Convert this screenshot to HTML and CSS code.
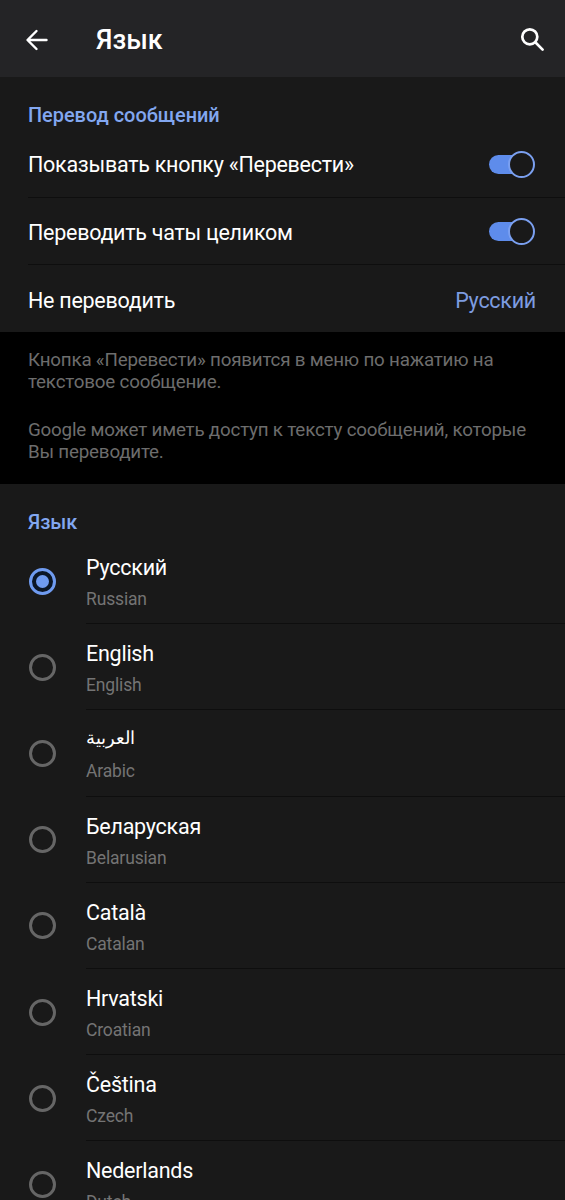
FILE: index.html
```html
<!DOCTYPE html>
<html lang="ru">
<head>
    <meta charset="UTF-8">
    <meta name="viewport" content="width=device-width, initial-scale=1.0">
    <title>Язык</title>
    <link rel="stylesheet" href="styles.css">
</head>
<body>
    <header class="toolbar">
        <svg class="icon-back" viewBox="0 0 24 24">
            <path d="M21.5 12H3M11.5 3L2.5 12l9 9"/>
        </svg>
        <h1>Язык</h1>
        <svg class="icon-search" viewBox="0 0 26 26">
            <circle cx="9.8" cy="9.8" r="7.5"/>
            <path d="M15.3 15.3l7.3 7.3"/>
        </svg>
    </header>

    <section class="settings">
        <h2>Перевод сообщений</h2>
        <div class="option">
            <span>Показывать кнопку «Перевести»</span>
            <div class="switch"></div>
        </div>
        <div class="option">
            <span>Переводить чаты целиком</span>
            <div class="switch"></div>
        </div>
        <div class="option">
            <span>Не переводить</span>
            <span class="value">Русский</span>
        </div>
    </section>

    <div class="note">
        <p>Кнопка «Перевести» появится в меню по нажатию на<br>текстовое сообщение.</p>
        <p>Google может иметь доступ к тексту сообщений, которые<br>Вы переводите.</p>
    </div>

    <section class="languages">
        <h2>Язык</h2>
        <div class="language">
            <div class="radio checked"></div>
            <div class="names"><b>Русский</b><small>Russian</small></div>
        </div>
        <div class="language">
            <div class="radio"></div>
            <div class="names"><b>English</b><small>English</small></div>
        </div>
        <div class="language">
            <div class="radio"></div>
            <div class="names"><b class="arabic" lang="ar">العربية</b><small>Arabic</small></div>
        </div>
        <div class="language">
            <div class="radio"></div>
            <div class="names"><b>Беларуская</b><small>Belarusian</small></div>
        </div>
        <div class="language">
            <div class="radio"></div>
            <div class="names"><b>Català</b><small>Catalan</small></div>
        </div>
        <div class="language">
            <div class="radio"></div>
            <div class="names"><b>Hrvatski</b><small>Croatian</small></div>
        </div>
        <div class="language">
            <div class="radio"></div>
            <div class="names"><b>Čeština</b><small>Czech</small></div>
        </div>
        <div class="language">
            <div class="radio"></div>
            <div class="names"><b>Nederlands</b><small>Dutch</small></div>
        </div>
    </section>
</body>
</html>
```
FILE: styles.css
```css
*, *::after {
    box-sizing: border-box;
}

body {
    font-family: Roboto, "Noto Sans", sans-serif;
    margin: 0;
    height: 1200px;
    overflow: hidden;
    background-color: #191919;
    color: #fff;
}

h1, h2, p {
    margin: 0;
}

.toolbar {
    display: flex;
    align-items: center;
    height: 77px;
    padding: 2px 20px 0 25px;
    background-color: #242426;
}

.toolbar h1 {
    flex: 1;
    margin-left: 47px;
    font-size: 26.8px;
    font-weight: 500;
    line-height: 30px;
}

.toolbar svg {
    fill: none;
    stroke: #fff;
    stroke-width: 2.4;
    stroke-linecap: round;
    stroke-linejoin: round;
}

.icon-back {
    width: 24px;
    height: 24px;
}

.toolbar .icon-search {
    width: 26px;
    height: 26px;
    margin-right: -1px;
    stroke-width: 2.7;
}

h2 {
    color: #82a7f0;
    font-size: 19.9px;
    font-weight: 500;
    line-height: 24px;
}

.settings {
    height: 255px;
    padding: 27px 0 0 28px;
}

.settings h2 {
    height: 26.4px;
}

.option {
    display: flex;
    align-items: center;
    justify-content: space-between;
    height: 67.4px;
    padding-right: 29px;
    border-bottom: 1px solid #0e0e0e;
    font-size: 21.5px;
    letter-spacing: -0.27px;
}

.option span {
    padding-top: 2.5px;
}

.option:last-child {
    border-bottom: none;
}

.value {
    color: #7d9ce0;
}

.switch {
    display: flex;
    align-items: center;
    justify-content: flex-end;
    width: 38px;
    height: 19px;
    margin: 1px 9px 0 0;
    border-radius: 10px;
    background-color: #5e8ceb;
}

.switch::after {
    content: "";
    flex: none;
    width: 27px;
    height: 27px;
    margin-right: -8px;
    border: 2px solid #7ba0f0;
    border-radius: 50%;
    background-color: #191919;
}

.note {
    height: 152px;
    padding: 17px 0 0 28px;
    background-color: #000;
    color: #6d6d6d;
    font-size: 18.8px;
    letter-spacing: -0.2px;
    line-height: 22.4px;
}

.note p {
    margin-bottom: 25px;
    white-space: nowrap;
}

.languages h2 {
    height: 54px;
    padding: 27px 0 0 28px;
}

.language {
    display: flex;
    align-items: center;
    height: 86.2px;
    padding-left: 29px;
}

.radio {
    flex: none;
    width: 27px;
    height: 27px;
    border: 3px solid #666;
    border-radius: 50%;
}

.radio.checked {
    display: flex;
    align-items: center;
    justify-content: center;
    border-color: #6f9bf0;
    background-color: #0b1626;
}

.radio.checked::after {
    content: "";
    width: 13px;
    height: 13px;
    border-radius: 50%;
    background-color: #6f9bf0;
}

.names {
    display: flex;
    flex-direction: column;
    flex: 1;
    height: 100%;
    margin-left: 30px;
    padding-top: 16px;
    border-bottom: 1px solid #0e0e0e;
}

.names b {
    font-size: 21.5px;
    font-weight: 400;
    letter-spacing: -0.25px;
    line-height: 28px;
}

.names .arabic {
    margin: -2px 0 2px;
    font-size: 18px;
    letter-spacing: 0;
}

.names small {
    margin-top: 6px;
    color: #747474;
    font-size: 17.5px;
    letter-spacing: -0.15px;
    line-height: 22px;
}
```
